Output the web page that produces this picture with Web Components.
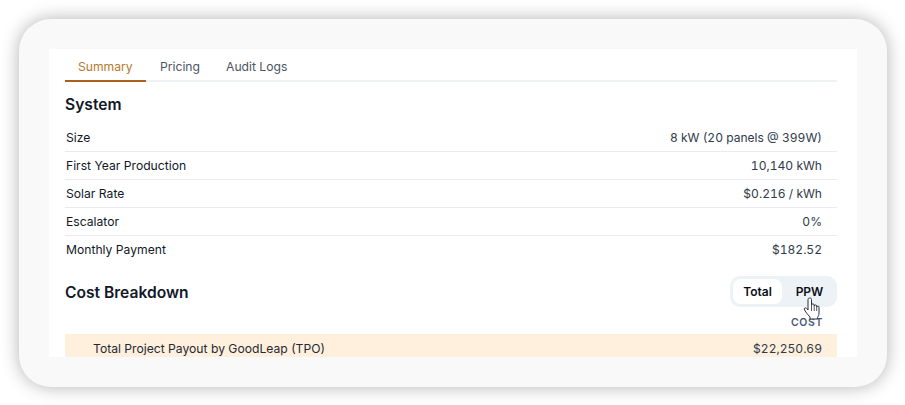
<!DOCTYPE html>
<html lang="en">
<head>
<meta charset="UTF-8">
<title>Summary</title>
<style>
  html, body { margin: 0; padding: 0; background: #fff; }
  body { width: 905px; height: 405px; overflow: hidden; padding: 19px 18px 18px 19px; box-sizing: border-box; font-family: Inter, "Liberation Sans", sans-serif; }
</style>
</head>
<body>
<app-frame>
  <tab-bar></tab-bar>
  <section-title>System</section-title>
  <data-row label="Size" value="8 kW (20 panels @ 399W)"></data-row>
  <data-row label="First Year Production" value="10,140 kWh"></data-row>
  <data-row label="Solar Rate" value="$0.216 / kWh"></data-row>
  <data-row label="Escalator" value="0%"></data-row>
  <data-row label="Monthly Payment" value="$182.52" last></data-row>
  <cost-header></cost-header>
  <payout-row label="Total Project Payout by GoodLeap (TPO)" value="$22,250.69"></payout-row>
</app-frame>
<script>
  function shadow(el, html) {
    el.attachShadow({mode: 'open'}).innerHTML = html;
  }

  class AppFrame extends HTMLElement {
    constructor() {
      super();
      shadow(this, `<style>
        :host { display: block; width: 868px; height: 368px; padding: 30px; box-sizing: border-box;
          background: #f9f9f9; border-radius: 32px; box-shadow: 0 0 18px rgba(0,0,0,.3); }
        .inner { background: #fff; height: 308px; padding: 0 20px 0 16px; box-sizing: border-box; overflow: hidden; color: #111827; }
      </style><div class="inner"><slot></slot></div>`);
    }
  }

  class TabBar extends HTMLElement {
    constructor() {
      super();
      shadow(this, `<style>
        :host { display: flex; height: 33px; border-bottom: 2px solid #eef1f5; box-sizing: border-box; font-size: 12.15px; line-height: 16px; color: #4b5563; }
        div { padding: 10px 14px 0 13px; height: 33px; box-sizing: border-box; }
        .on { color: #b5792a; border-bottom: 2px solid #a9621b; width: 81px; }
        .p { width: 67px; padding-left: 14px; }
      </style><div class="on">Summary</div><div class="p">Pricing</div><div>Audit Logs</div>`);
    }
  }

  class SectionTitle extends HTMLElement {
    constructor() {
      super();
      shadow(this, `<style>
        :host { display: block; font-size: 15.6px; font-weight: 600; line-height: 20px; padding: 13px 0 9px; color: #111827; }
      </style><slot></slot>`);
    }
  }

  class DataRow extends HTMLElement {
    constructor() {
      super();
      const last = this.hasAttribute('last');
      shadow(this, `<style>
        :host { display: flex; justify-content: space-between; height: 28px; box-sizing: border-box;
          padding: 5px 15px 0 1px; line-height: 18px; font-size: 12.15px; color: #111827;
          border-bottom: ${last ? 0 : '1px solid #e8ebf0'}; }
        .v { color: #2f3a4a; font-size: 12.05px; font-variant-numeric: tabular-nums; }
      </style><span>${this.getAttribute('label')}</span><span class="v">${this.getAttribute('value')}</span>`);
    }
  }

  class CostHeader extends HTMLElement {
    constructor() {
      super();
      shadow(this, `<style>
        :host { display: block; position: relative; height: 70px; }
        .top { display: flex; justify-content: space-between; align-items: center; height: 30px; padding-top: 12px; }
        h2 { margin: 4px 0 0; font-size: 15.6px; font-weight: 600; line-height: 20px; color: #111827; }
        .toggle { display: flex; align-items: center; width: 107px; height: 31px; box-sizing: border-box; padding: 2px 0 2px 3px; background: #edf2f7; border-radius: 10px; font-size: 12px; font-weight: 600; color: #0b0f19; }
        .toggle span { display: block; text-align: center; line-height: 25px; }
        .t { width: 49px; background: #fff; border-radius: 8px; }
        .w { width: 55px; }
        .cost { position: absolute; right: 14px; top: 52px; font-size: 10.5px; font-weight: 600; letter-spacing: .6px; line-height: 14px; color: #4b5875; }
        svg { position: absolute; left: 738px; top: 33px; }
      </style><div class="top"><h2>Cost Breakdown</h2>
        <div class="toggle"><span class="t">Total</span><span class="w">PPW</span></div></div>
        <div class="cost">COST</div>
        <svg width="18" height="23" viewBox="0 0 18 23"><path d="M5 2.500c0-2 3.500-2 3.500 0V8c0-1.500 2.700-1.500 2.700 0v1c0-1.300 2.500-1.300 2.500 0v1c0-1.200 2.300-1.200 2.300 0v6c0 2-.8 3.500-1.500 4.500V22H7v-2C5 18 3 15.500 1.500 13c-1-1.800 1-3 2.200-1.600L5 13z" fill="#fff" stroke="#2b2f36" stroke-width="1" stroke-linejoin="round"/><path d="M8.500 8v6M11.200 9v5M13.700 10v4" stroke="#2b2f36" stroke-width=".8" fill="none"/></svg>`);
    }
  }

  class PayoutRow extends HTMLElement {
    constructor() {
      super();
      shadow(this, `<style>
        :host { display: flex; justify-content: space-between; height: 23px; box-sizing: border-box; padding: 6px 15px 0 28px; background: #fef0dc; font-size: 12.15px; line-height: 18px; color: #1f2937; }
        .v { color: #2f3a4a; font-size: 12.05px; font-variant-numeric: tabular-nums; }
      </style><span>${this.getAttribute('label')}</span><span class="v">${this.getAttribute('value')}</span>`);
    }
  }

  customElements.define('app-frame', AppFrame);
  customElements.define('tab-bar', TabBar);
  customElements.define('section-title', SectionTitle);
  customElements.define('data-row', DataRow);
  customElements.define('cost-header', CostHeader);
  customElements.define('payout-row', PayoutRow);
</script>
</body>
</html>
